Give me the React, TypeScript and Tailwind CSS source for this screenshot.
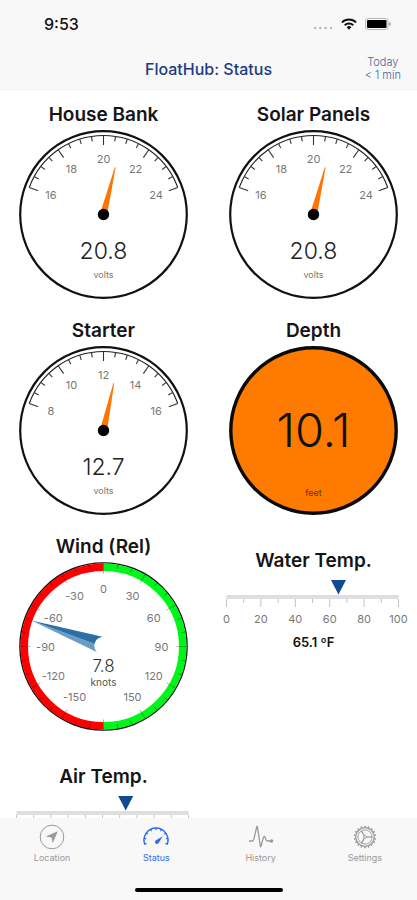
import type { ReactNode } from "react";

const polar = (r: number, deg: number): [number, number] => {
  const a = (deg * Math.PI) / 180;
  return [r * Math.sin(a), -r * Math.cos(a)];
};

const pt = (r: number, deg: number) =>
  polar(r, deg)
    .map((n) => n.toFixed(2))
    .join(" ");

function Tick({ from, to, deg, color, width }: { from: number; to: number; deg: number; color: string; width: number }) {
  const [x1, y1] = polar(from, deg);
  const [x2, y2] = polar(to, deg);
  return <line x1={x1} y1={y1} x2={x2} y2={y2} stroke={color} strokeWidth={width} />;
}

function Dial({ label, children }: { label: string; children: ReactNode }) {
  return (
    <svg role="img" aria-label={label} viewBox="-84.5 -84.5 169 169" className="mt-0.5 size-[169px]" textAnchor="middle">
      {children}
    </svg>
  );
}

function Tile({ title, inset, children }: { title: string; inset?: boolean; children: ReactNode }) {
  return (
    <section className={`flex flex-col items-center ${inset ? "pt-3.5" : ""}`}>
      <h2 className="text-[19px] leading-[26px] font-semibold text-[#151515]">{title}</h2>
      {children}
    </section>
  );
}

const SWEEP = 70;

function VoltGauge({ title, min, max, value }: { title: string; min: number; max: number; value: number }) {
  const angle = (v: number) => ((v - min) / (max - min)) * 2 * SWEEP - SWEEP;
  const labels = [0, 1, 2, 3, 4].map((i) => min + (i * (max - min)) / 4);
  return (
    <Tile title={title}>
      <Dial label={`${title} voltage`}>
        <circle r="83.3" fill="#fff" stroke="#111" strokeWidth="2.2" />
        <path d={`M${pt(79, -SWEEP)}A79 79 0 0 1 ${pt(79, SWEEP)}`} fill="none" stroke="#222" strokeWidth="1.1" />
        {Array.from({ length: 17 }, (_, i) => (
          <Tick key={i} from={79} to={i % 4 ? 74 : 69.5} deg={-SWEEP + (i * SWEEP) / 8} color="#333" width={1.1} />
        ))}
        {labels.map((v) => {
          const [x, y] = polar(56, angle(v));
          return (
            <text key={v} x={x} y={y + 4} className="fill-[#777] text-[11px]">
              {v}
            </text>
          );
        })}
        <path d="M-3.6 0L-0.4 -48.5H0.4L3.6 0Z" fill="#ff7500" transform={`rotate(${angle(value)})`} />
        <circle r="5.7" fill="#000" />
        <text y="44" className="fill-[#222] text-[23px] font-light">
          {value.toFixed(1)}
        </text>
        <text y="63" className="fill-[#777] text-[9px]">
          volts
        </text>
      </Dial>
    </Tile>
  );
}

function DepthGauge() {
  return (
    <Tile title="Depth">
      <Dial label="Depth in feet">
        <circle r="82.7" fill="#ff7b00" stroke="#0a0a0a" strokeWidth="3.4" />
        <text y="16" className="fill-[#111] text-[47px] font-light">
          10.1
        </text>
        <text y="65" className="fill-[#5c3410] text-[9px]">
          feet
        </text>
      </Dial>
    </Tile>
  );
}

function WindGauge() {
  const bearings = [-150, -120, -90, -60, -30, 0, 30, 60, 90, 120, 150];
  return (
    <Tile title="Wind (Rel)">
      <Dial label="Relative wind">
        <circle r="83.6" fill="#fff" stroke="#111" strokeWidth="1.4" />
        <path d="M0 -79.3A79.3 79.3 0 0 0 0 79.3" fill="none" stroke="#ff0000" strokeWidth="7.6" />
        <path d="M0 -79.3A79.3 79.3 0 0 1 0 79.3" fill="none" stroke="#00f51a" strokeWidth="7.6" />
        {Array.from({ length: 36 }, (_, i) => (
          <Tick key={i} from={83} to={i % 3 ? 79 : 76} deg={i * 10} color="rgba(0,0,0,.45)" width={0.7} />
        ))}
        {Array.from({ length: 12 }, (_, i) => (
          <Tick key={i} from={76} to={73} deg={i * 30} color="#999" width={0.8} />
        ))}
        {bearings.map((b) => {
          const [x, y] = polar(58, b);
          return (
            <text key={b} x={x} y={y + 4} className="fill-[#777] text-[11px]">
              {b}
            </text>
          );
        })}
        <path d="M-72 -26L-1 -9.8Q-8 -8.5 -9 -2.4Z" fill="#2b6fa3" />
        <path d="M-72 -26L-9 -2.8Q-9.8 1.5 -6.8 5.6Z" fill="#6c9cc3" />
        <text y="25" className="fill-[#333] text-[17px] font-light">
          7.8
        </text>
        <text y="39" className="fill-[#555] text-[10px]">
          knots
        </text>
      </Dial>
    </Tile>
  );
}

function TempScale({ title, value, reading }: { title: string; value: number; reading?: string }) {
  const x = (v: number) => 16.5 + v * 1.72;
  return (
    <Tile title={title} inset>
      <svg role="img" aria-label={title} viewBox="0 0 207 52" className="mt-1 h-[52px] w-[207px]" textAnchor="middle">
        <path d={`M${x(value) - 7.5} 2h15l-7.5 14.5z`} fill="#0f4a93" />
        <rect x="16.5" y="17" width="172" height="4" fill="#dedede" />
        {Array.from({ length: 11 }, (_, i) => (
          <line key={i} x1={x(i * 10)} x2={x(i * 10)} y1="21" y2={i % 2 ? 25 : 29} stroke="#c4c4c4" />
        ))}
        {reading &&
          [0, 20, 40, 60, 80, 100].map((v) => (
            <text key={v} x={x(v)} y="45" className="fill-[#777] text-[11px]">
              {v}
            </text>
          ))}
      </svg>
      {reading && <p className="mt-0.5 text-[13px] leading-5 font-semibold text-[#111]">{reading}</p>}
    </Tile>
  );
}

function LocationIcon() {
  return (
    <svg viewBox="0 0 26 26" className="size-[26px]" fill="none">
      <circle cx="13" cy="13" r="11.8" stroke="currentColor" strokeWidth="1" />
      <path d="M18.8 7.3L6.8 12.4L12.6 13.5L13.7 19.2Z" fill="currentColor" />
    </svg>
  );
}

function StatusIcon() {
  return (
    <svg viewBox="-14 -16 28 26" className="h-[26px] w-7" fill="none" stroke="currentColor">
      <path d={`M${pt(12, -112)}A12 12 0 1 1 ${pt(12, 112)}`} strokeWidth="1.5" />
      {[-110, -82, -55, -27, 0, 27, 55, 82, 110].map((d) => (
        <Tick key={d} from={12.3} to={10} deg={d} color="currentColor" width={1.3} />
      ))}
      <path d="M6.8 -3.8L2.9 2.6A2 2 0 1 1 0.1 0.2Z" fill="currentColor" stroke="none" />
    </svg>
  );
}

function HistoryIcon() {
  return (
    <svg viewBox="0 0 26 26" className="size-[26px]" fill="none" stroke="currentColor" strokeLinejoin="round">
      <path d="M1 17H4.3Q5.4 17 6 14.6L8.6 3.4Q9 1.6 9.5 3.4L12.3 21.6Q12.7 24 13.2 21.6L15.4 13.6Q16.2 11 17.1 13.6L18.2 16Q18.7 17 20 17H22" strokeWidth="1.3" />
      <circle cx="23.5" cy="17" r="1.8" fill="currentColor" stroke="none" />
    </svg>
  );
}

function SettingsIcon() {
  return (
    <svg viewBox="-13 -13 26 26" className="size-[26px]" fill="none" stroke="currentColor">
      <circle r="9.3" strokeWidth="1.3" />
      <circle r="7.1" strokeWidth="0.9" />
      <circle r="1.4" strokeWidth="0.9" />
      {Array.from({ length: 18 }, (_, i) => (
        <Tick key={i} from={9.6} to={11.2} deg={i * 20} color="currentColor" width={1.6} />
      ))}
      {[30, 150, 270].map((d) => (
        <Tick key={d} from={1.4} to={7.1} deg={d - 60} color="currentColor" width={1.3} />
      ))}
    </svg>
  );
}

const tabs = [
  { name: "Location", icon: <LocationIcon /> },
  { name: "Status", icon: <StatusIcon />, active: true },
  { name: "History", icon: <HistoryIcon /> },
  { name: "Settings", icon: <SettingsIcon /> },
];

export default function App() {
  return (
    <div className="flex h-screen flex-col bg-white font-[Inter,'Liberation_Sans',sans-serif]">
      <header className="shrink-0 border-b border-[#f3f3f3] bg-[#f8f8f8]">
        <div className="flex h-12 items-center justify-between pr-[26px] pl-11">
          <span className="text-[16px] leading-6 font-medium text-[#111]">9:53</span>
          <div className="flex items-center gap-2">
            <svg viewBox="0 0 20 12" className="h-3 w-5" fill="#b8b8b8">
              <circle cx="2" cy="10" r="1.2" />
              <circle cx="7.3" cy="10" r="1.2" />
              <circle cx="12.6" cy="10" r="1.2" />
              <circle cx="18" cy="10" r="1.2" />
            </svg>
            <svg viewBox="0 0 16 12" className="h-3 w-4" fill="none" stroke="#111" strokeWidth="2">
              <path d="M.9 4.4A10.2 10.2 0 0 1 15.1 4.4" />
              <path d="M3.7 7.2A6.2 6.2 0 0 1 12.3 7.2" />
              <path d="M5.7 9.2A3.3 3.3 0 0 1 10.3 9.2L8 11.7Z" fill="#111" stroke="none" />
            </svg>
            <svg viewBox="0 0 26 12" className="h-3 w-[26px]">
              <rect x=".5" y=".5" width="22.5" height="11" rx="2.6" fill="none" stroke="#b5b5b5" />
              <rect x="2" y="2" width="19.5" height="8" rx="1" fill="#000" />
              <path d="M24.2 4v4q1.5-.6 1.5-2t-1.5-2z" fill="#999" />
            </svg>
          </div>
        </div>
        <div className="grid h-[41px] grid-cols-[1fr_auto_1fr] items-center px-4">
          <h1 className="col-start-2 text-[16px] leading-6 font-medium text-[#1d3c80]">FloatHub: Status</h1>
          <p className="justify-self-end text-center text-[11px] leading-[13px] font-light text-[#4a62a0]">
            Today
            <br />
            &lt; 1 min
          </p>
        </div>
      </header>

      <main className="min-h-0 flex-1 overflow-y-auto [scrollbar-width:none]">
        <div className="grid grid-cols-2 gap-x-[3px] gap-y-[19px] pt-3">
          <VoltGauge title="House Bank" min={16} max={24} value={20.8} />
          <VoltGauge title="Solar Panels" min={16} max={24} value={20.8} />
          <VoltGauge title="Starter" min={8} max={16} value={12.7} />
          <DepthGauge />
          <WindGauge />
          <TempScale title="Water Temp." value={65.1} reading="65.1 ºF" />
          <TempScale title="Air Temp." value={63.5} />
        </div>
      </main>

      <footer className="shrink-0 bg-[#f8f8f8] pb-2">
        <nav className="grid h-[70px] grid-cols-4 items-start pt-1.5">
          {tabs.map((t) => (
            <button
              key={t.name}
              type="button"
              aria-current={t.active ? "page" : undefined}
              className={`flex flex-col items-center gap-0.5 text-[9px] leading-3 ${t.active ? "text-[#2f6bea]" : "text-[#999]"}`}
            >
              {t.icon}
              {t.name}
            </button>
          ))}
        </nav>
        <div className="mx-auto h-1 w-[148px] rounded-full bg-black" />
      </footer>
    </div>
  );
}
